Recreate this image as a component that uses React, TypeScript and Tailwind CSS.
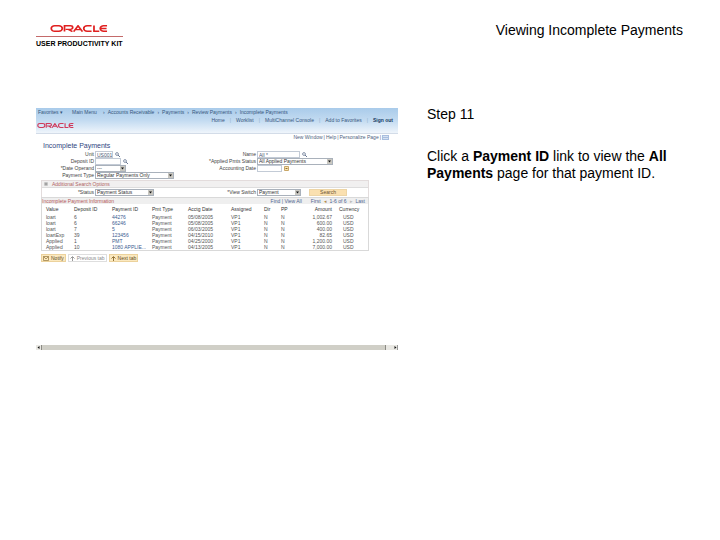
import React from 'react';
import { clsx } from 'clsx';

const crumbs = ['Accounts Receivable', 'Payments', 'Review Payments', 'Incomplete Payments'];
const navLinks = ['Home', 'Worklist', 'MultiChannel Console', 'Add to Favorites', 'Sign out'];

const columns = [
  { label: 'Value', className: 'w-[32px]' },
  { label: 'Deposit ID', className: 'w-[38px]' },
  { label: 'Payment ID', className: 'w-[40px]' },
  { label: 'Pmt Type', className: 'w-[36px]' },
  { label: 'Acctg Date', className: 'w-[43px]' },
  { label: 'Assigned', className: 'w-[33px]' },
  { label: 'Dir', className: 'w-[17px]' },
  { label: 'PP', className: 'w-[15px]' },
  { label: 'Amount', className: 'w-[36px] text-right' },
  { label: 'Currency', className: 'pl-[7px]' },
];

const payments = [
  ['loart', '6', '44276', 'Payment', '05/08/2005', 'VP1', 'N', 'N', '1,002.67', 'USD'],
  ['loart', '6', '66246', 'Payment', '05/08/2005', 'VP1', 'N', 'N', '600.00', 'USD'],
  ['loart', '7', '5', 'Payment', '06/03/2005', 'VP1', 'N', 'N', '400.00', 'USD'],
  ['loartExp', '39', '123456', 'Payment', '04/15/2010', 'VP1', 'N', 'N', '82.65', 'USD'],
  ['Applied', '1', 'PMT', 'Payment', '04/25/2000', 'VP1', 'N', 'N', '1,200.00', 'USD'],
  ['Applied', '10', '1080 APPLIE...', 'Payment', '04/13/2005', 'VP1', 'N', 'N', '7,000.00', 'USD'],
];

function OracleMark({ className }: { className?: string }) {
  return (
    <svg viewBox="0 0 60 9" preserveAspectRatio="none" className={className} fill="none" stroke="currentColor" strokeWidth="1.8" aria-label="Oracle">
      <path d="M4.8 1h4.4a3.5 3.5 0 0 1 0 7H4.8a3.5 3.5 0 0 1 0-7Z" />
      <path d="M15 8.5V1h6.2a2.2 2.2 0 0 1 0 4.6h-5M19 5.6l4.2 2.9" />
      <path d="M24.5 8.5 29 1l4.6 7.5M27 6h5" />
      <path d="M43 1h-4.6a3.5 3.5 0 0 0 0 7H43" />
      <path d="M45.5 0.5V8H51" />
      <path d="M59 1h-3.5a3.5 3.5 0 0 0 0 7H59M53 4.5h5.5" />
    </svg>
  );
}

function Lens() {
  return (
    <svg viewBox="0 0 5 5" className="h-[5px] w-[5px] shrink-0" fill="none" stroke="#6b7a94">
      <circle cx="2" cy="2" r="1.4" strokeWidth="0.8" />
      <path d="m3 3 2 2" />
    </svg>
  );
}

interface FieldProps {
  id: string;
  label: string;
  value?: string;
  width: string;
  children?: React.ReactNode;
}

function TextField({ id, label, value = '', width, children }: FieldProps) {
  return (
    <>
      <label htmlFor={id} className="pr-px text-right whitespace-nowrap text-[#444]">{label}</label>
      <div className="flex items-center gap-0.5">
        <input id={id} defaultValue={value} className={clsx('h-[7px] border border-[#c3cbd6] bg-white pl-px leading-[5px] text-[#4a5670]', width)} />
        {children}
      </div>
    </>
  );
}

function SelectField({ id, label, value = '', width, children }: FieldProps) {
  return (
    <>
      <label htmlFor={id} className="pr-px text-right whitespace-nowrap text-[#444]">{label}</label>
      <div className="flex items-center gap-2">
        <div className={clsx('flex h-[7px] items-stretch border border-[#a9b1bb] bg-white', width)}>
          <select id={id} className="min-w-0 flex-1 appearance-none pl-px leading-[5px] text-[#333]">
            <option>{value}</option>
          </select>
          <svg viewBox="0 0 5 5" className="h-full w-[5px] bg-[#c9c7c0]">
            <path d="M1 1.5h3L2.500 3.500Z" fill="#111" />
          </svg>
        </div>
        {children}
      </div>
    </>
  );
}

function Banner() {
  return (
    <header className="h-[26px] border-b border-[#d3dce8] bg-linear-to-b from-[#a9cbea] via-[#c3dbf1] to-[#eff5fb] text-[#36567c]">
      <nav className="flex h-2 items-center gap-[3px] pl-[2px] whitespace-nowrap">
        <a href="#favorites" className="w-[31px]">Favorites ▾</a>
        <a href="#menu" className="w-[28px]">Main Menu</a>
        {crumbs.map((crumb) => (
          <React.Fragment key={crumb}>
            <span>›</span>
            <a href="#crumb">{crumb}</a>
          </React.Fragment>
        ))}
      </nav>
      <nav className="flex h-[7px] items-center justify-end gap-[5px] pr-[5px] whitespace-nowrap">
        {navLinks.map((link, i) => (
          <React.Fragment key={link}>
            {i > 0 && <span className="text-[#8fadcb]">|</span>}
            <a href="#nav" className={clsx(link === 'Sign out' && 'font-bold text-[#173a63]')}>{link}</a>
          </React.Fragment>
        ))}
      </nav>
      <OracleMark className="ml-px h-[5px] w-[37px] text-[#cf3a5c]" />
    </header>
  );
}

function SearchForm() {
  return (
    <form className="grid grid-cols-[54px_108px_54px_1fr]" onSubmit={(e) => e.preventDefault()}>
      <TextField id="unit" label="Unit" value="US001" width="w-[18px]"><Lens /></TextField>
      <TextField id="name" label="Name" value="All *" width="w-[43px]"><Lens /></TextField>
      <TextField id="deposit" label="Deposit ID" width="w-[26px]"><Lens /></TextField>
      <SelectField id="applied" label="*Applied Pmts Status" value="All Applied Payments" width="w-[76px]" />
      <SelectField id="operand" label="*Date Operand" value="---" width="w-[31px]" />
      <TextField id="acctdate" label="Accounting Date" width="w-[25px]">
        <svg viewBox="0 0 5 5" className="h-[5px] w-[5px]">
          <path d="M0.5 0.5h4v4h-4Z" fill="#f8e6b4" stroke="#c9a767" />
          <path d="M1.5 2.5h2" stroke="#8f6a2e" />
        </svg>
      </TextField>
      <SelectField id="pmttype" label="Payment Type" value="Regular Payments Only" width="w-[79px]" />
    </form>
  );
}

function PaymentTable() {
  return (
    <section className="mr-[29px] border border-[#d9d9d9]">
      <div className="flex h-[6px] items-center justify-between bg-[#efefef] pr-[3px]">
        <h3 className="text-[#b5585a]">Incomplete Payment Information</h3>
        <div className="flex gap-[9px] text-[#4d6591]">
          <span><a href="#find">Find</a> | <a href="#all">View All</a></span>
          <span className="flex gap-[3px]">
            <span>First</span>
            <span className="text-[#b08a4a]">◂</span>
            <span>1-6 of 6</span>
            <span className="text-[#b9b9b9]">▸</span>
            <span>Last</span>
          </span>
        </div>
      </div>
      <table className="mt-[2px] w-full table-fixed border-separate border-spacing-0 text-left whitespace-nowrap text-[#555]">
        <thead>
          <tr>
            {columns.map((col, i) => (
              <th key={col.label} className={clsx('pb-[2px] font-normal text-[#333]', col.className, i === 0 && 'pl-1')}>{col.label}</th>
            ))}
          </tr>
        </thead>
        <tbody>
          {payments.map((row, r) => (
            <tr key={r}>
              {row.map((cell, i) => (
                <td key={i} className={clsx(i === 0 && 'pl-1', i === 8 && 'text-right', i === 9 && 'pl-[11px]')}>
                  {i === 2 ? <a href="#payment" className="text-[#3d5c91]">{cell}</a> : cell}
                </td>
              ))}
            </tr>
          ))}
        </tbody>
      </table>
    </section>
  );
}

function PaymentsWindow() {
  return (
    <div className="min-w-0 text-[5px] leading-[6px]">
      <Banner />
      <div className="flex items-center justify-end gap-px pr-[9px] text-[#4f5f80]">
        <a href="#window">New Window</a>
        <span>|</span>
        <a href="#help">Help</a>
        <span>|</span>
        <a href="#personalize">Personalize Page</a>
        <span>|</span>
        <svg viewBox="0 0 7 5" className="h-[5px] w-[7px]">
          <path d="M0 0h7v5H0Z" fill="#a9bede" />
          <path d="M1 1.5h5M1 3.5h5" stroke="#e9f0fa" strokeWidth="0.7" />
        </svg>
      </div>

      <div className="pl-[5px]">
        <h2 className="pt-px pl-[2px] text-[7px] leading-[10px] text-[#2f4580]">Incomplete Payments</h2>
        <SearchForm />

        <section className="mt-px mr-[29px] border border-b-0 border-[#e3dcdc]">
          <h3 className="flex h-[7px] items-center gap-1 border-b border-[#dddddd] bg-[#f1f0f0] pl-[2px] text-[#b06464]">
            <svg viewBox="0 0 4 4" className="h-1 w-1">
              <path d="M0 0h4v4H0Z" fill="#d2d2d2" />
              <path d="M2 0.5v3M0.5 2h3" stroke="#777" strokeWidth="0.6" />
            </svg>
            Additional Search Options
          </h3>
          <div className="grid grid-cols-[53px_108px_54px_1fr] py-px">
            <SelectField id="status" label="*Status" value="Payment Status" width="w-[59px]" />
            <SelectField id="view" label="*View Switch" value="Payment" width="w-[44px]">
              <button type="button" className="h-[7px] w-[38px] border border-[#edd5a6] bg-[#fae0b0] leading-[5px] text-[#6b5330]">Search</button>
            </SelectField>
          </div>
        </section>

        <PaymentTable />

        <div className="mt-[3px] flex gap-[2px]">
          <button type="button" className="flex h-2 items-center gap-[2px] border border-[#ecd29c] bg-[#fbe9c0] px-px text-[#5f4a25]">
            <svg viewBox="0 0 6 5" className="h-[5px] w-[6px]" fill="none" stroke="#94753b" strokeWidth="0.7">
              <path d="M0.5 0.5h5v4h-5ZM0.5 0.5 3 3l2.5-2.5" />
            </svg>
            Notify
          </button>
          <button type="button" className="flex h-2 items-center gap-[2px] border border-[#dedede] bg-white px-px text-[#8a8a8a]">
            <svg viewBox="0 0 5 5" className="h-[5px] w-[5px]" fill="none" stroke="#999">
              <path d="M2.5 5V1M0.5 2.5 2.5 0.5l2 2" />
            </svg>
            Previous tab
          </button>
          <button type="button" className="flex h-2 items-center gap-[2px] border border-[#ecd29c] bg-[#fbe9c0] px-px text-[#5f4a25]">
            <svg viewBox="0 0 5 5" className="h-[5px] w-[5px]" fill="none" stroke="#94753b">
              <path d="M2.5 5V1M0.5 2.5 2.5 0.5l2 2" />
            </svg>
            Next tab
          </button>
        </div>
      </div>

      <div className="mt-[83px] flex h-[5px] items-stretch bg-[#e9e8e3]">
        <svg viewBox="0 0 5 5" className="w-[5px]"><path d="M3.5 1v3L1.5 2.5Z" fill="#111" /></svg>
        <div className="flex-1 border-x border-[#8c8b85] bg-[#d0cfc7]" />
        <svg viewBox="0 0 12 5" className="w-[12px]"><path d="M8.5 1v3l2-1.5Z" fill="#111" /><path d="M11.5 0v5" stroke="#999" /></svg>
      </div>
    </div>
  );
}

export default function App() {
  return (
    <div className="min-h-screen bg-white pr-[37px] pl-9 font-['Liberation_Sans',Arial,sans-serif] text-black">
      <header className="flex h-[108px] items-start justify-between pt-[22px]">
        <div className="flex flex-col items-center pt-[3px]">
          <OracleMark className="h-[7px] w-[58px] text-[#e02020]" />
          <span className="mt-1 border-t border-[#c46a6a] pt-[2px] text-[7px] leading-[9px] font-bold whitespace-nowrap">USER PRODUCTIVITY KIT</span>
        </div>
        <h1 className="text-[14px] leading-[17px]">Viewing Incomplete Payments</h1>
      </header>
      <main className="grid grid-cols-[362fr_256fr] gap-[29px]">
        <PaymentsWindow />
        <article className="-mt-[2px] text-[14px] leading-[17px]">
          <h2 className="mb-[25px]">Step 11</h2>
          <p>
            Click a <b>Payment ID</b> link to view the <b>All Payments</b> page for that payment ID.
          </p>
        </article>
      </main>
    </div>
  );
}
